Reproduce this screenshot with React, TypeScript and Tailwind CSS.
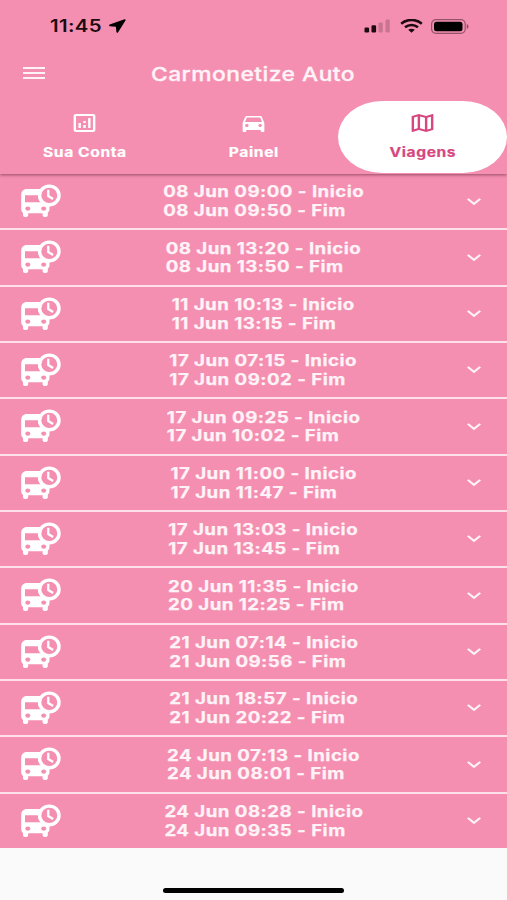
import { clsx } from "clsx";
import type { IconType } from "react-icons";
import {
  MdDirectionsCar,
  MdExpandMore,
  MdOutlineAnalytics,
  MdOutlineMap,
} from "react-icons/md";

type Trip = { start: string; end: string };

const TRIPS: Trip[] = [
  { start: "08 Jun 09:00", end: "08 Jun 09:50" },
  { start: "08 Jun 13:20", end: "08 Jun 13:50" },
  { start: "11 Jun 10:13", end: "11 Jun 13:15" },
  { start: "17 Jun 07:15", end: "17 Jun 09:02" },
  { start: "17 Jun 09:25", end: "17 Jun 10:02" },
  { start: "17 Jun 11:00", end: "17 Jun 11:47" },
  { start: "17 Jun 13:03", end: "17 Jun 13:45" },
  { start: "20 Jun 11:35", end: "20 Jun 12:25" },
  { start: "21 Jun 07:14", end: "21 Jun 09:56" },
  { start: "21 Jun 18:57", end: "21 Jun 20:22" },
  { start: "24 Jun 07:13", end: "24 Jun 08:01" },
  { start: "24 Jun 08:28", end: "24 Jun 09:35" },
];

const TABS: { label: string; icon: IconType; active?: boolean }[] = [
  { label: "Sua Conta", icon: MdOutlineAnalytics },
  { label: "Painel", icon: MdDirectionsCar },
  { label: "Viagens", icon: MdOutlineMap, active: true },
];

function StatusBar() {
  return (
    <div className="flex h-[50px] items-center pl-[50px] pr-[38px] pt-0.5 text-[#1c0a10]">
      <span className="w-[53px] origin-left scale-x-[1.2] whitespace-nowrap text-[17px] font-semibold leading-none tracking-[0.3px]">
        11:45
      </span>
      <svg className="ml-1.5 h-[14px] w-[17px]" viewBox="0 0 17 14" fill="#000">
        <path d="M15.6.2.7 5.6c-.9.4-.8 1.5.2 1.6l6 .5.5 5.3c.1 1 1.2 1.1 1.7.3L16.6 1.2c.3-.6-.3-1.2-1-1Z" />
      </svg>
      <svg className="ml-auto h-[14px] w-[26px]" viewBox="0 0 26 14" fill="currentColor">
        <rect x="0.5" y="8.5" width="4.6" height="5" rx="1.2" />
        <rect x="7.5" y="6.2" width="4.6" height="7.3" rx="1.2" />
        <rect x="14.5" y="3.4" width="4.3" height="10.1" rx="1.2" opacity="0.2" />
        <rect x="21.5" y="0.5" width="4.3" height="13" rx="1.2" opacity="0.2" />
      </svg>
      <svg className="ml-[10px] h-[14px] w-[23px]" viewBox="0 0 23 14" fill="none" stroke="currentColor" strokeWidth="2.6">
        <path d="M1.2 4.8C7-.3 16-.3 21.8 4.8" />
        <path d="M5 8.3c3.8-3.1 9.2-3.1 13 0" />
        <path d="M8.2 10.8c2-1.5 4.6-1.5 6.6 0l-3.3 2.9Z" fill="currentColor" stroke="none" />
      </svg>
      <svg className="ml-[8px] h-[15px] w-[38px]" viewBox="0 0 38 15">
        <rect x="0.6" y="0.6" width="33.6" height="13.8" rx="4.4" fill="none" stroke="currentColor" strokeWidth="1.2" opacity="0.45" />
        <rect x="3" y="2.7" width="28.5" height="9.6" rx="2.5" fill="#000" />
        <path d="M35.8 5c2.2.7 2.2 4.3 0 5Z" fill="currentColor" opacity="0.5" />
      </svg>
    </div>
  );
}

function BusClockIcon({ className }: { className?: string }) {
  return (
    <svg className={className} viewBox="0 0 40 34" fill="none">
      <path
        d="M6 5h14l8.5 14v6c0 1.8-.8 2.8-1.7 3.6V31c0 1.2-.8 1.9-2 1.9h-1.2c-1.2 0-2-.7-2-1.9v-1.8H7.2V31c0 1.2-.8 1.9-2 1.9H4c-1.2 0-2-.7-2-1.9v-2.2C.8 28 .2 27 .2 25V11C.2 7.500 2.200 5 6 5Z"
        fill="#fff"
      />
      <path d="M4 11.3h13c.2 3 1.300 5.200 3 7H4Z" fill="#f48fb1" />
      <ellipse cx="6.8" cy="24.6" rx="2.5" ry="2.2" fill="#f48fb1" />
      <ellipse cx="22.7" cy="24.6" rx="2.5" ry="2.2" fill="#f48fb1" />
      <ellipse cx="28.3" cy="11.4" rx="9.7" ry="9.3" fill="#f48fb1" stroke="#fff" strokeWidth="3.4" />
      <path d="M27.3 5.8V12l4.8 3" stroke="#fff" strokeWidth="2.3" />
    </svg>
  );
}

function TripRow({ start, end }: Trip) {
  return (
    <li className="relative flex h-[56.34px] items-center justify-center border-b-2 border-[#fde0ea] pl-[20px] last:h-[54.34px] last:border-b-0">
      <BusClockIcon className="absolute left-[21px] top-[10px] h-[34px] w-[40px]" />
      <div className="scale-x-[1.2] whitespace-nowrap pt-[1.5px] text-[15.6px] font-bold leading-[18.6px] tracking-[0.38px] [-webkit-text-stroke:0.25px]">
        <p>{start} - Inicio</p>
        <p>{end} - Fim</p>
      </div>
      <MdExpandMore
        preserveAspectRatio="none"
        className="absolute right-[19px] top-[15.5px] h-[23px] w-[28px]"
      />
    </li>
  );
}

export default function App() {
  return (
    <div className="flex h-[900px] w-[507px] flex-col overflow-hidden bg-[#fafafa] font-['Inter',sans-serif] text-[#fff3f7]">
      <header className="relative z-10 h-[174px] shrink-0 bg-[#f48fb1] shadow-[0_1px_3px_rgba(90,30,55,0.6)]">
        <StatusBar />
        <div className="relative flex h-[50px] items-center justify-center pb-[2px]">
          <button
            aria-label="Menu"
            className="absolute left-[23px] top-[17px] flex w-[22px] flex-col gap-[2.6px]"
          >
            <span className="h-[2.4px] bg-current" />
            <span className="h-[2.4px] bg-current" />
            <span className="h-[2.4px] bg-current" />
          </button>
          <h1 className="scale-x-[1.2] whitespace-nowrap text-[19px] font-medium leading-none tracking-[0.4px] [-webkit-text-stroke:0.3px]">
            Carmonetize Auto
          </h1>
        </div>
        <nav className="grid h-[73px] grid-cols-3 pt-px">
          {TABS.map(({ label, icon: Icon, active }) => (
            <button
              key={label}
              className={clsx(
                "flex flex-col items-center rounded-[44px/36px] pt-[10px]",
                active ? "bg-white text-[#d6487f]" : "text-white",
              )}
            >
              <Icon preserveAspectRatio="none" className="h-[24px] w-[29px]" />
              <span className="mt-[9px] scale-x-[1.2] whitespace-nowrap text-[13px] font-bold leading-4 tracking-[0.5px] [-webkit-text-stroke:0.2px]">
                {label}
              </span>
            </button>
          ))}
        </nav>
      </header>
      <ul className="shrink-0 bg-[#f48fb1]">
        {TRIPS.map((trip) => (
          <TripRow key={trip.start} {...trip} />
        ))}
      </ul>
      <div className="mx-auto mb-[7px] mt-auto h-[5px] w-[181px] rounded-full bg-black" />
    </div>
  );
}
